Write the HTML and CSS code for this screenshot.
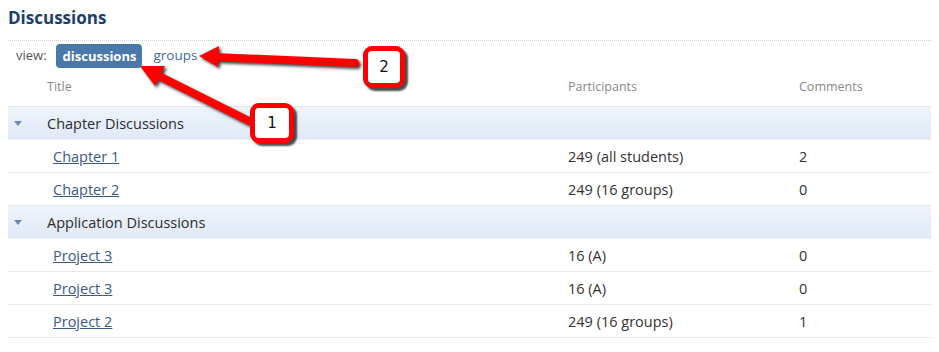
FILE: index.html
```html
<!DOCTYPE html>
<html lang="en">
<head>
  <meta charset="UTF-8" />
  <title>Discussions</title>
  <link rel="stylesheet" href="styles.css">
</head>
<body>

  <div class="page">
    <h1>Discussions</h1>

    <div class="view-bar">
      <span class="view-label">view:</span>
      <span class="view-tab active">discussions</span>
      <a class="view-tab" href="#">groups</a>
    </div>

    <div class="table">
      <div class="row head">
        <div></div>
        <div>Title</div>
        <div>Participants</div>
        <div>Comments</div>
      </div>

      <div class="row group">
        <div><span class="caret"></span></div>
        <div>Chapter Discussions</div>
        <div></div>
        <div></div>
      </div>
      <div class="row">
        <div></div>
        <div><a class="item" href="#">Chapter 1</a></div>
        <div>249 (all students)</div>
        <div>2</div>
      </div>
      <div class="row">
        <div></div>
        <div><a class="item" href="#">Chapter 2</a></div>
        <div>249 (16 groups)</div>
        <div>0</div>
      </div>

      <div class="row group">
        <div><span class="caret"></span></div>
        <div>Application Discussions</div>
        <div></div>
        <div></div>
      </div>
      <div class="row">
        <div></div>
        <div><a class="item" href="#">Project 3</a></div>
        <div>16 (A)</div>
        <div>0</div>
      </div>
      <div class="row">
        <div></div>
        <div><a class="item" href="#">Project 3</a></div>
        <div>16 (A)</div>
        <div>0</div>
      </div>
      <div class="row">
        <div></div>
        <div><a class="item" href="#">Project 2</a></div>
        <div>249 (16 groups)</div>
        <div>1</div>
      </div>
    </div>
  </div>

  <!-- annotation overlay -->
  <svg class="arrows" width="939" height="352" viewBox="0 0 939 352">
    <g class="arrow">
      <line x1="355" y1="63" x2="214" y2="57" />
      <polygon points="199,56 219,46 218,67" />
    </g>
    <g class="arrow">
      <line x1="249" y1="121" x2="161" y2="77" />
      <polygon points="140,66 165,66 155,86" />
    </g>
  </svg>
  <div class="callout c2">2</div>
  <div class="callout c1">1</div>

</body>
</html>
```

FILE: styles.css
```css
body { margin: 0; background: #fff; font-family: "Open Sans", "DejaVu Sans", sans-serif; color: #333; position: relative; }
.page { padding: 0 8px; }

h1 { margin: 0; padding-top: 8px; height: 20px; line-height: 20px; font-size: 17px; font-weight: bold; color: #1d3f6b; margin-bottom: 12px; }

.view-bar { border-top: 1px dotted #cfcfcf; padding: 2px 0 0 8px; height: 30px; display: flex; align-items: flex-start; gap: 5px; font-size: 13px; }
.view-label { color: #555; line-height: 24px; margin-right: 4px; }
.view-tab { line-height: 24px; padding: 0 6px; border-radius: 4px; color: #456a98; text-decoration: none; font-size: 13.5px; }
.view-tab.active { background: #4a78a8; color: #fff; font-weight: bold; margin-top: 1px; font-size: 13px; padding: 0 6px 0 7px; }

.table { width: 923px; font-size: 14.5px; }
.row { display: grid; grid-template-columns: 39px 521px 231px 1fr; height: 32px; align-items: center; border-bottom: 1px solid #e8e8e8; }
.row.head { color: #888; height: 28px; padding-top: 5px; align-items: start; font-size: 12.5px; }
.row.group { background: linear-gradient(#eef4fc, #dfe9f6); border-bottom-color: #f0f0f0; color: #2d2d2d; }
.item { color: #3a5a86; margin-left: 6px; }
.caret { display: block; width: 0; height: 0; margin-left: 6px; border-left: 4px solid transparent; border-right: 4px solid transparent; border-top: 5px solid #6e8cb3; }

.arrows { position: absolute; left: 0; top: 0; pointer-events: none; }
.arrow { filter: drop-shadow(2px 2px 1.5px rgba(0, 0, 0, 0.75)); }
.arrow line { stroke: #f00; stroke-width: 8; stroke-linecap: round; }
.arrow polygon { fill: #f00; }

.callout { position: absolute; width: 32px; height: 31px; border: 5px solid #f00; border-radius: 9px; background: #fff; box-shadow: 3px 3px 2px rgba(0, 0, 0, 0.7); font-family: "DejaVu Sans", sans-serif; font-size: 15px; color: #111; display: flex; align-items: center; justify-content: center; }
.c2 { left: 363px; top: 46px; height: 32px; }
.c1 { left: 250px; top: 103px; width: 34px; height: 30px; }
```
